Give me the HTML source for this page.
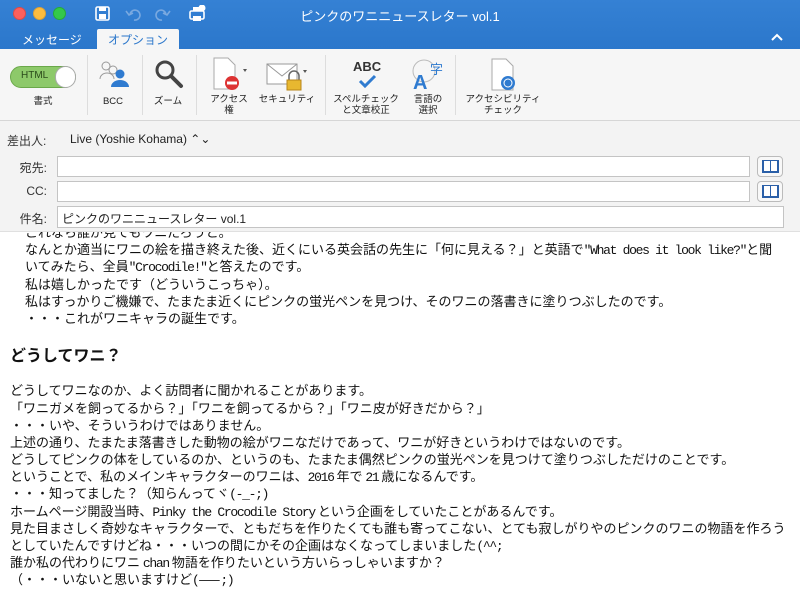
<!DOCTYPE html>
<html><head><meta charset="utf-8"><style>
*{margin:0;padding:0;box-sizing:border-box}
body{width:800px;height:600px;overflow:hidden;background:#fff;font-family:"Liberation Sans","Noto Sans CJK JP",sans-serif;position:relative}
.top{position:absolute;left:0;top:0;width:800px;height:49px;background:linear-gradient(#3581d4,#2b77cb);z-index:3}
.dot{position:absolute;top:7px;width:13px;height:13px;border-radius:50%}
.title{position:absolute;left:0;width:800px;top:6px;text-align:center;color:#fff;font-size:13px}
.tab{position:absolute;top:29px;height:20px;font-size:12px;color:#fff;padding-top:2px}
.tab.act{background:#f6f6f6;color:#2b77cb;left:97px;width:82px;text-align:center;border-radius:2px 2px 0 0}
.ribbon{position:absolute;top:49px;left:0;width:800px;height:72px;background:#f6f6f6;border-bottom:1px solid #d6d6d6;z-index:3}
.sep{position:absolute;top:6px;width:1px;height:60px;background:#ddd}
.lbl{position:absolute;font-size:9.5px;color:#222;text-align:center;line-height:11px;white-space:nowrap;transform:translateX(-50%)}
.hdr{position:absolute;top:121px;left:0;width:800px;height:111px;background:#f3f3f3;z-index:3;border-bottom:1px solid #e0e0e0}
.fl{position:absolute;font-size:12px;color:#333;text-align:right;width:47px;left:0}
.box{position:absolute;background:#fff;border:1px solid #c4c4c4;height:21px}
.bk{position:absolute;left:757px;width:26px;height:21px;border:1px solid #bbb;border-radius:4px;background:#f8f8f8}
.body{position:absolute;left:10px;top:0;font-family:"Noto Sans CJK JP","Liberation Mono",monospace;font-size:13px;line-height:17.2px;color:#111;white-space:nowrap;width:790px;overflow:hidden}
.body p{height:17.2px}
.m{font-family:"Liberation Mono",monospace;font-size:13px;letter-spacing:-1.3px}
h2{font-size:16px;font-weight:bold;height:17px}
</style></head><body>
<div class="top">
<div class="dot" style="left:13px;background:#fc605c;border:1px solid #de4a46"></div>
<div class="dot" style="left:33px;background:#fdbc40;border:1px solid #dea236"></div>
<div class="dot" style="left:53px;background:#34c84a;border:1px solid #27aa36"></div>
<svg style="position:absolute;left:94px;top:5px" width="120" height="18">
<rect x="2" y="2" width="13" height="13" rx="1.5" fill="none" stroke="#fff" stroke-width="1.6"/><rect x="5" y="2" width="7" height="4" fill="#fff"/><rect x="5" y="9" width="7" height="5" fill="#fff"/>
<path d="M36 10 a5 5 0 1 1 4 5 M32 6 l3 4 l4-2" fill="none" stroke="#7aa9e0" stroke-width="1.6"/>
<path d="M72 10 a5 5 0 1 0 -4 5 M76 6 l-3 4 l-4-2" fill="none" stroke="#7aa9e0" stroke-width="1.6"/>
<rect x="96" y="6" width="14" height="8" rx="1.5" fill="none" stroke="#fff" stroke-width="1.6"/><rect x="99" y="2" width="8" height="4" fill="#fff"/><rect x="99" y="11" width="8" height="5" fill="#fff"/><circle cx="108" cy="3" r="3.5" fill="#fff"/>
</svg>
<div class="title">ピンクのワニニュースレター vol.1</div>
<div class="tab" style="left:22px">メッセージ</div>
<div class="tab act">オプション</div>
<svg style="position:absolute;left:771px;top:33px" width="12" height="8"><path d="M1 7 L6 2 L11 7" fill="none" stroke="#fff" stroke-width="2"/></svg>
</div>
<div class="ribbon">
<div style="position:absolute;left:10px;top:17px;width:66px;height:22px;border-radius:11px;background:#8dc96a;border:1px solid #6aa84a"></div>
<div style="position:absolute;left:21px;top:21px;font-size:10px;color:#2a4a1a">HTML</div>
<div style="position:absolute;left:55px;top:17px;width:21px;height:22px;border-radius:11px;background:#fff;border:1px solid #aaa"></div>
<div class="lbl" style="left:43px;top:47px">書式</div>
<div class="sep" style="left:87px"></div>
<svg style="position:absolute;left:98px;top:10px" width="32" height="30"><circle cx="8" cy="7" r="4" fill="none" stroke="#999"/><circle cx="15" cy="11" r="4" fill="none" stroke="#999"/><path d="M2 20 a7 6 0 0 1 14 0" fill="none" stroke="#999"/><circle cx="22" cy="15" r="4.5" fill="#2f7bd0"/><path d="M13 28 a9 7 0 0 1 18 0z" fill="#2f7bd0"/></svg>
<div class="lbl" style="left:113px;top:47px">BCC</div>
<div class="sep" style="left:142px"></div>
<svg style="position:absolute;left:154px;top:10px" width="30" height="30"><circle cx="11" cy="11" r="8" fill="none" stroke="#444" stroke-width="3"/><path d="M17 17 L27 27" stroke="#444" stroke-width="4" stroke-linecap="round"/></svg>
<div class="lbl" style="left:168px;top:47px">ズーム</div>
<div class="sep" style="left:196px"></div>
<svg style="position:absolute;left:210px;top:7px" width="42" height="36"><path d="M4 2 h14 l7 7 v24 h-21z" fill="#fff" stroke="#aaa"/><circle cx="22" cy="27" r="7" fill="#d33"/><rect x="17" y="25.5" width="10" height="3" fill="#fff"/><path d="M33 13 l4 0 l-2 3z" fill="#555"/></svg>
<div class="lbl" style="left:229px;top:45px">アクセス<br>権</div>
<svg style="position:absolute;left:265px;top:12px" width="46" height="32"><rect x="2" y="3" width="30" height="20" fill="#fff" stroke="#999"/><path d="M2 3 L17 15 L32 3" fill="none" stroke="#999"/><path d="M24 19 v-4 a5 5 0 0 1 10 0 v4" fill="none" stroke="#666" stroke-width="1.5"/><rect x="22" y="19" width="14" height="10" fill="#e8b830" stroke="#b8861a"/><path d="M38 9 l4 0 l-2 3z" fill="#555"/></svg>
<div class="lbl" style="left:287px;top:45px">セキュリティ</div>
<div class="sep" style="left:325px"></div>
<div style="position:absolute;left:353px;top:10px;font-size:13px;font-weight:bold;color:#333">ABC</div>
<svg style="position:absolute;left:358px;top:25px" width="20" height="14"><path d="M2 7 L7 12 L17 2" fill="none" stroke="#2f7bd0" stroke-width="3"/></svg>
<div class="lbl" style="left:366px;top:45px">スペルチェック<br>と文章校正</div>
<svg style="position:absolute;left:410px;top:8px" width="36" height="34"><circle cx="14" cy="14" r="11" fill="none" stroke="#bbb"/><text x="3" y="32" font-family="Liberation Sans" font-weight="bold" font-size="20" fill="#2f7bd0">A</text><text x="20" y="17" font-family="Noto Sans CJK JP" font-size="13" fill="#2f7bd0">字</text></svg>
<div class="lbl" style="left:428px;top:45px">言語の<br>選択</div>
<div class="sep" style="left:455px"></div>
<svg style="position:absolute;left:488px;top:8px" width="34" height="36"><path d="M4 2 h14 l7 7 v24 h-21z" fill="#fff" stroke="#aaa"/><circle cx="20" cy="26" r="7" fill="#2f7bd0"/><circle cx="20" cy="26" r="4" fill="none" stroke="#fff"/></svg>
<div class="lbl" style="left:503px;top:45px">アクセシビリティ<br>チェック</div>
</div>
<div class="hdr">
<div class="fl" style="top:11px;left:7px;text-align:left">差出人:</div>
<div style="position:absolute;left:70px;top:11px;font-size:12px;color:#222">Live (Yoshie Kohama) ⌃⌄</div>
<div class="fl" style="top:38px">宛先:</div>
<div class="box" style="left:57px;top:35px;width:693px"></div>
<div class="bk" style="top:35px"></div>
<div class="fl" style="top:63px">CC:</div>
<div class="box" style="left:57px;top:60px;width:693px"></div>
<div class="bk" style="top:60px"></div>
<div class="fl" style="top:89px">件名:</div>
<div class="box" style="left:57px;top:85px;width:727px;height:22px;font-size:12px;padding:3px 4px;color:#222">ピンクのワニニュースレター vol.1</div>
<svg style="position:absolute;left:761px;top:38px" width="20" height="40"><g id="b"><rect x="1" y="1" width="17" height="13" fill="#2a5fa8"/><rect x="3" y="2" width="6" height="10" fill="#fff"/><rect x="10" y="2" width="6" height="10" fill="#fff"/></g><use href="#b" y="25"/></svg>
</div>
<div class="body" style="top:223px">
<p style="padding-left:15px">これなら誰が見てもワニだろうと。</p>
<p style="padding-left:15px">なんとか適当にワニの絵を描き終えた後、近くにいる英会話の先生に「何に見える？」と英語で<span class="m">"What does it look like?"</span>と聞</p>
<p style="padding-left:15px">いてみたら、全員<span class="m">"Crocodile!"</span>と答えたのです。</p>
<p style="padding-left:15px">私は嬉しかったです（どういうこっちゃ）。</p>
<p style="padding-left:15px">私はすっかりご機嫌で、たまたま近くにピンクの蛍光ペンを見つけ、そのワニの落書きに塗りつぶしたのです。</p>
<p style="padding-left:15px">・・・これがワニキャラの誕生です。</p>
<p></p>
<h2 style="margin-top:3px">どうしてワニ？</h2>
<p style="height:17px"></p>
<p style="margin-top:1px">どうしてワニなのか、よく訪問者に聞かれることがあります。</p>
<p>「ワニガメを飼ってるから？」「ワニを飼ってるから？」「ワニ皮が好きだから？」</p>
<p>・・・いや、そういうわけではありません。</p>
<p>上述の通り、たまたま落書きした動物の絵がワニなだけであって、ワニが好きというわけではないのです。</p>
<p>どうしてピンクの体をしているのか、というのも、たまたま偶然ピンクの蛍光ペンを見つけて塗りつぶしただけのことです。</p>
<p>ということで、私のメインキャラクターのワニは、<span class="m">2016</span> 年で <span class="m">21</span> 歳になるんです。</p>
<p>・・・知ってました？（知らんってヾ<span class="m">(-_-;)</span></p>
<p>ホームページ開設当時、<span class="m">Pinky the Crocodile Story</span> という企画をしていたことがあるんです。</p>
<p>見た目まさしく奇妙なキャラクターで、ともだちを作りたくても誰も寄ってこない、とても寂しがりやのピンクのワニの物語を作ろう</p>
<p>としていたんですけどね・・・いつの間にかその企画はなくなってしまいました<span class="m">(^^;</span></p>
<p>誰か私の代わりにワニ <span class="m">chan</span> 物語を作りたいという方いらっしゃいますか？</p>
<p>（・・・いないと思いますけど<span class="m">(</span>——<span class="m">;)</span></p>
</div>
</body></html>
